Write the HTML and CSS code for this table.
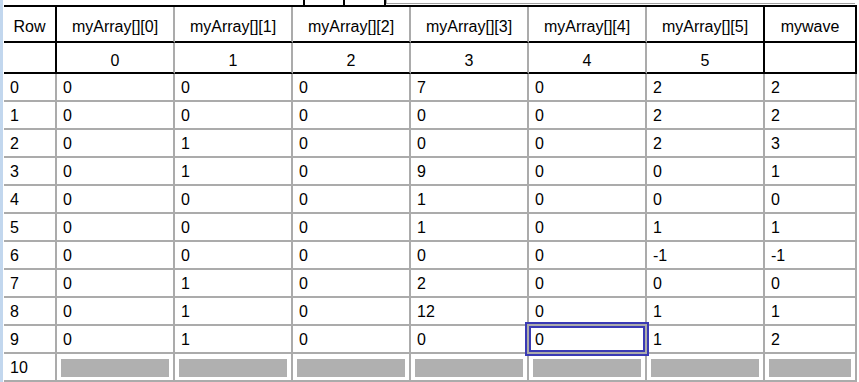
FILE: index.html
```html
<!DOCTYPE html>
<html>
<head>
<meta charset="utf-8">
<link rel="stylesheet" href="styles.css">
</head>
<body>
<div class="page">
  <div class="side"></div>
  <div class="main">
    <div class="tabstrip">
      <span class="tab-space"></span>
      <span class="tick"></span>
      <span class="tab-gap1"></span>
      <span class="tick"></span>
      <span class="tab-gap2"></span>
      <span class="tick"></span>
      <span class="pane-edge"></span>
    </div>
    <div class="grid">
      <div class="h1 dark">Row</div>
      <div class="h1">myArray[][0]</div>
      <div class="h1">myArray[][1]</div>
      <div class="h1">myArray[][2]</div>
      <div class="h1">myArray[][3]</div>
      <div class="h1">myArray[][4]</div>
      <div class="h1 dark">myArray[][5]</div>
      <div class="h1 dark">mywave</div>

      <div class="h2 dark"></div>
      <div class="h2">0</div>
      <div class="h2">1</div>
      <div class="h2">2</div>
      <div class="h2">3</div>
      <div class="h2">4</div>
      <div class="h2 dark">5</div>
      <div class="h2 dark"></div>

      <div class="c">0</div><div class="c">0</div><div class="c">0</div><div class="c">0</div><div class="c">7</div><div class="c">0</div><div class="c">2</div><div class="c">2</div>
      <div class="c">1</div><div class="c">0</div><div class="c">0</div><div class="c">0</div><div class="c">0</div><div class="c">0</div><div class="c">2</div><div class="c">2</div>
      <div class="c">2</div><div class="c">0</div><div class="c">1</div><div class="c">0</div><div class="c">0</div><div class="c">0</div><div class="c">2</div><div class="c">3</div>
      <div class="c">3</div><div class="c">0</div><div class="c">1</div><div class="c">0</div><div class="c">9</div><div class="c">0</div><div class="c">0</div><div class="c">1</div>
      <div class="c">4</div><div class="c">0</div><div class="c">0</div><div class="c">0</div><div class="c">1</div><div class="c">0</div><div class="c">0</div><div class="c">0</div>
      <div class="c">5</div><div class="c">0</div><div class="c">0</div><div class="c">0</div><div class="c">1</div><div class="c">0</div><div class="c">1</div><div class="c">1</div>
      <div class="c">6</div><div class="c">0</div><div class="c">0</div><div class="c">0</div><div class="c">0</div><div class="c">0</div><div class="c">-1</div><div class="c">-1</div>
      <div class="c">7</div><div class="c">0</div><div class="c">1</div><div class="c">0</div><div class="c">2</div><div class="c">0</div><div class="c">0</div><div class="c">0</div>
      <div class="c">8</div><div class="c">0</div><div class="c">1</div><div class="c">0</div><div class="c">12</div><div class="c">0</div><div class="c">1</div><div class="c">1</div>
      <div class="c">9</div><div class="c">0</div><div class="c">1</div><div class="c">0</div><div class="c">0</div><div class="c focus">0</div><div class="c">1</div><div class="c">2</div>
      <div class="c">10</div>
      <div class="c empty"><span class="bar"></span></div>
      <div class="c empty"><span class="bar"></span></div>
      <div class="c empty"><span class="bar"></span></div>
      <div class="c empty"><span class="bar"></span></div>
      <div class="c empty"><span class="bar"></span></div>
      <div class="c empty"><span class="bar"></span></div>
      <div class="c empty"><span class="bar"></span></div>
    </div>
  </div>
</div>
</body>
</html>
```
FILE: styles.css
```css
html, body {
  margin: 0;
  padding: 0;
  background: #ffffff;
}
body {
  font-family: "Liberation Sans", Arial, sans-serif;
  font-size: 16px;
  color: #000;
}
.page {
  display: flex;
  height: 382px;
  overflow: hidden;
}
.side {
  width: 3px;
  background: #c2d7ee;
  flex: none;
}
.main {
  margin-left: 1px;
  display: flex;
  flex-direction: column;
}
.tabstrip {
  display: flex;
  height: 5px;
}
.tab-space { width: 299px; }
.tab-gap1 { width: 38px; }
.tab-gap2 { width: 39px; }
.tick {
  width: 2px;
  background: #000;
}
.pane-edge {
  width: 468px;
  height: 3px;
  border-left: 1px solid #a0a0a0;
  border-bottom: 1px solid #a0a0a0;
}
.grid {
  display: grid;
  grid-template-columns: 53px repeat(6, 118px) 92px;
  border-top: 2px solid #000;
}
.grid > div {
  box-sizing: border-box;
  border-right: 2px solid #ababab;
  border-bottom: 2px solid #ababab;
  line-height: 18px;
  white-space: nowrap;
}
.grid > .h1 {
  height: 36px;
  padding-top: 11px;
  text-align: center;
  border-bottom-color: #000;
}
.grid > .h2 {
  height: 31px;
  padding-top: 9px;
  text-align: center;
  border-bottom-color: #000;
}
.grid > .dark {
  border-right-color: #000;
}
.grid > .c {
  height: 28px;
  padding: 5px 6px 0;
}
.grid > .empty {
  padding: 5px 4px 0;
}
.bar {
  display: block;
  height: 18px;
  background: #b0b0b0;
}
.focus {
  position: relative;
}
.focus::before,
.focus::after {
  content: "";
  position: absolute;
  border: 2px solid #3a3ab4;
}
.focus::before {
  inset: -4px;
}
.focus::after {
  inset: 0;
}
```
